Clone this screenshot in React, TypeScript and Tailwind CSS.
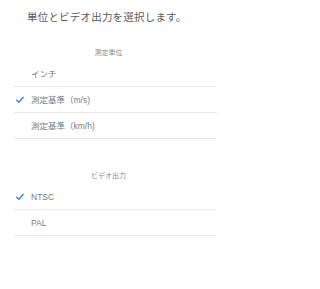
const font = { fontFamily: '"Noto Sans CJK JP", "Noto Sans", sans-serif' };
const itemFont = { fontFamily: '"Liberation Sans", "Noto Sans CJK JP", sans-serif' };

interface Option {
  label: string;
  checked?: boolean;
}

interface SectionProps {
  title: string;
  options: Option[];
  divider: string;
}

function Check() {
  return (
    <svg width="8" height="7" viewBox="0 0 8 7" className="absolute left-[16px] top-1/2 -translate-y-1/2">
      <path d="M0.8 3.8 L2.9 5.8 L7.2 0.8" fill="none" stroke="#3f7ee6" strokeWidth="1.4" strokeLinecap="round" strokeLinejoin="round" />
    </svg>
  );
}

function Section({ title, options, divider }: SectionProps) {
  return (
    <div>
      <div className="h-[18px] flex items-center justify-center text-[7px] text-[#8a8a8a]">{title}</div>
      {options.map((o) => (
        <div key={o.label} className="relative h-[26px]">
          {o.checked && <Check />}
          <div
            className="h-full ml-[14px] pl-[17px] pt-[2px] flex items-center text-[8.5px] text-[#7c7c7c] border-b"
            style={{ ...itemFont, borderColor: divider }}
          >
            {o.label}
          </div>
        </div>
      ))}
    </div>
  );
}

export default function App() {
  return (
    <div className="w-[217px] h-[289px] bg-white overflow-hidden" style={font}>
      <div className="h-[43px] pt-[9px] pl-[27px] text-[10.5px] leading-[16px] tracking-[0.2px] text-[#5a5a5a]">
        単位とビデオ出力を選択します。
      </div>
      <Section
        title="測定単位"
        divider="#e8e8e8"
        options={[{ label: "インチ" }, { label: "測定基準（m/s)", checked: true }, { label: "測定基準（km/h)" }]}
      />
      <div className="h-[27px]" />
      <Section
        title="ビデオ出力"
        divider="#efe5ec"
        options={[{ label: "NTSC", checked: true }, { label: "PAL" }]}
      />
    </div>
  );
}
